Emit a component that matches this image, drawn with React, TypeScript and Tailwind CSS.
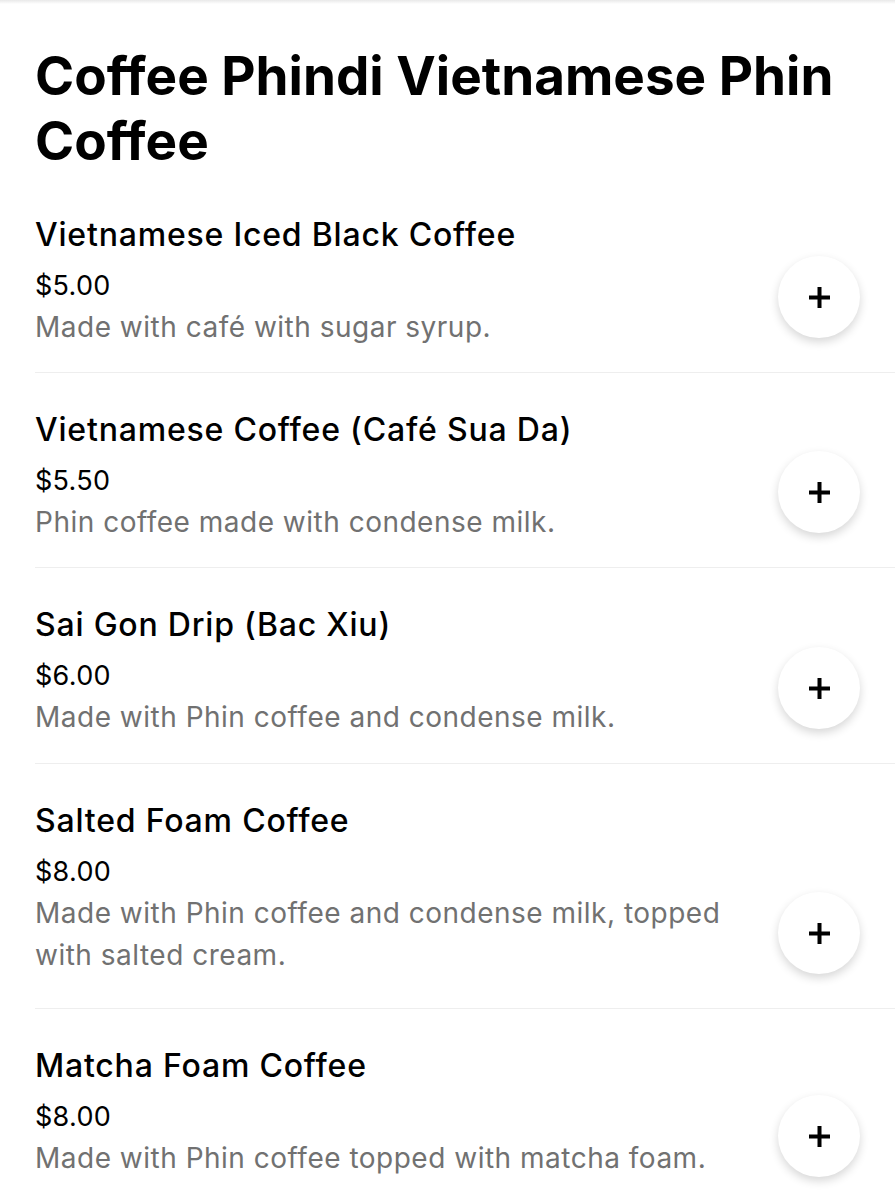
const menuItems = [
    {
        id: 1,
        name: "Vietnamese Iced Black Coffee",
        price: "$5.00",
        description: "Made with café with sugar syrup.",
        pad: "pb-[24px]",
    },
    {
        id: 2,
        name: "Vietnamese Coffee (Café Sua Da)",
        price: "$5.50",
        description: "Phin coffee made with condense milk.",
        pad: "pb-[24px]",
    },
    {
        id: 3,
        name: "Sai Gon Drip (Bac Xiu)",
        price: "$6.00",
        description: "Made with Phin coffee and condense milk.",
        pad: "pb-[25px]",
    },
    {
        id: 4,
        name: "Salted Foam Coffee",
        price: "$8.00",
        description: "Made with Phin coffee and condense milk, topped with salted cream.",
        pad: "pb-[32px]",
    },
    {
        id: 5,
        name: "Matcha Foam Coffee",
        price: "$8.00",
        description: "Made with Phin coffee topped with matcha foam.",
        pad: "pb-[32px]",
    },
];

function AddButton() {
    return (
        <button className="flex items-center justify-center w-[82px] h-[82px] rounded-full bg-white shadow-[0_4px_10px_rgba(0,0,0,0.16)] shrink-0 mb-[34px] mr-[35px]">
            <svg width="21" height="21" viewBox="0 0 21 21" className="text-black">
                <rect x="8.5" y="0" width="4" height="21" fill="currentColor" />
                <rect x="0" y="8.5" width="21" height="4" fill="currentColor" />
            </svg>
        </button>
    );
}

export default function App() {
    return (
        <div className="min-h-[1200px] w-[895px] bg-white text-black font-['Inter',sans-serif] overflow-hidden">
            <div className="h-[4px] bg-gradient-to-b from-[#e9e9e9] to-white" />

            <h1 className="pt-[40px] pl-[35px] pr-[35px] text-[53px] leading-[65px] font-bold">
                Coffee Phindi Vietnamese Phin Coffee
            </h1>

            <ul className="mt-[4px] pl-[35px]">
                {menuItems.map((item) => (
                    <li
                        key={item.id}
                        className="flex items-end border-b border-[#eeeeee] last:border-b-0"
                    >
                        <div className={`flex-1 pt-[37px] pr-[24px] ${item.pad}`}>
                            <div className="text-[32px] leading-[40px] font-medium tracking-[0.8px]">
                                {item.name}
                            </div>
                            <div className="mt-[14px] text-[27px] leading-[34px] tracking-[0.3px]">
                                {item.price}
                            </div>
                            <div className="mt-[3px] text-[28px] leading-[42px] tracking-[0.5px] text-[#717171]">
                                {item.description}
                            </div>
                        </div>
                        <AddButton />
                    </li>
                ))}
            </ul>
        </div>
    );
}
